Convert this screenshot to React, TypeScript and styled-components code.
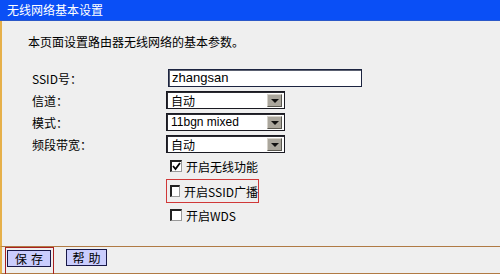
import React from "react";
import styled, { createGlobalStyle } from "styled-components";

const Global = createGlobalStyle`
  html, body { margin: 0; padding: 0; background: #efefef; }
  body { font-family: "Noto Sans CJK SC", "Liberation Sans", sans-serif; }
`;

const CJK = `"Noto Sans CJK SC", "Liberation Sans", sans-serif`;

const Page = styled.div`
  width: 500px;
  height: 274px;
  display: flex;
  flex-direction: column;
  background: #efefef;
  overflow: hidden;
`;

const TitleBar = styled.div`
  height: 21px;
  background: #0a4ff6;
  border-bottom: 1px solid #2a58c8;
  box-sizing: border-box;
  color: #ffffff;
  font-family: ${CJK};
  font-size: 12px;
  line-height: 20px;
  padding-left: 7px;
`;

const Body = styled.div`
  height: 226px;
  box-sizing: border-box;
  border-left: 2px solid #e6b04a;
  padding-top: 13px;
  display: flex;
  flex-direction: column;
`;

const Intro = styled.div`
  font-family: ${CJK};
  font-size: 12px;
  line-height: 16px;
  color: #000;
  padding-left: 26px;
`;

const FormGrid = styled.div`
  margin-top: 17px;
  display: grid;
  grid-template-columns: 134px 1fr;
  grid-auto-rows: 22px;
  padding-left: 30px;
  align-items: center;
`;

const Label = styled.div`
  font-family: ${CJK};
  font-size: 12px;
  color: #000;
`;

const TextInput = styled.div`
  margin-left: 2px;
  width: 194px;
  height: 18px;
  box-sizing: border-box;
  background: #fff;
  border: 1px solid #1c2440;
  box-shadow: inset 1px 1px 0 #5a6070;
  font-family: "Liberation Sans", Arial, sans-serif;
  font-size: 13px;
  line-height: 16px;
  padding-left: 3px;
  color: #000;
`;

const Select = styled.div`
  width: 119px;
  height: 18px;
  box-sizing: border-box;
  background: #fff;
  border: 1px solid #1a1a22;
  box-shadow: inset 1px 1px 0 #2a2a30;
  display: flex;
  align-items: stretch;
  padding: 2px 2px 1px 2px;
`;

const SelectText = styled.div<{ $latin?: boolean }>`
  flex: 1;
  font-family: ${(p) => (p.$latin ? `"Liberation Sans", Arial, sans-serif` : CJK)};
  font-size: 12px;
  line-height: 13px;
  padding-left: 2px;
  color: #000;
`;

const ArrowBox = styled.div`
  width: 15px;
  background: #aaa69c;
  border-top: 1px solid #d6d2ca;
  border-left: 1px solid #d6d2ca;
  border-right: 1px solid #5a5850;
  border-bottom: 1px solid #5a5850;
  box-sizing: border-box;
  display: flex;
  align-items: center;
  justify-content: center;
`;

const Triangle = styled.div`
  width: 0;
  height: 0;
  border-left: 4px solid transparent;
  border-right: 4px solid transparent;
  border-top: 4px solid #111;
`;

const CheckList = styled.div`
  display: flex;
  flex-direction: column;
  padding-left: 164px;
`;

const CheckRow = styled.div<{ $mt: number; $boxed?: boolean }>`
  margin-top: ${(p) => p.$mt}px;
  height: ${(p) => (p.$boxed ? 24 : 20)}px;
  box-sizing: border-box;
  display: flex;
  align-items: center;
  gap: 4px;
  padding-left: ${(p) => (p.$boxed ? 3 : 4)}px;
  border: ${(p) => (p.$boxed ? "1px solid #d03838" : "none")};
  width: ${(p) => (p.$boxed ? "93px" : "auto")};
`;

const Box = styled.div`
  width: 12px;
  height: 12px;
  box-sizing: border-box;
  background: #fff;
  border-top: 2px solid #222;
  border-left: 2px solid #222;
  border-right: 1px solid #9a9a9a;
  border-bottom: 1px solid #9a9a9a;
  display: flex;
  align-items: center;
  justify-content: center;
`;

const CheckText = styled.span`
  font-family: ${CJK};
  font-size: 12px;
  color: #000;
  white-space: nowrap;
`;

const Footer = styled.div`
  height: 28px;
  box-sizing: border-box;
  border-top: 1px solid #b07a44;
  border-bottom: 1px solid #b07a44;
  border-left: 2px solid #e6b04a;
  display: flex;
  align-items: flex-start;
`;

const RedFrame = styled.div`
  margin-left: 3px;
  height: 27px;
  box-sizing: border-box;
  border: 1px solid #a82020;
  border-bottom: none;
  padding: 2px 2px 0 1px;
`;

const Button = styled.div<{ $w: number }>`
  width: ${(p) => p.$w}px;
  height: 17px;
  box-sizing: border-box;
  background: #cacdfd;
  border: 1px solid #181848;
  font-family: ${CJK};
  font-size: 12px;
  line-height: 15px;
  letter-spacing: 4px;
  text-indent: 4px;
  text-align: center;
  color: #000;
`;

const HelpWrap = styled.div`
  margin-left: 12px;
  margin-top: 2px;
`;

const Check = () => (
  <svg width="9" height="9" viewBox="0 0 9 9">
    <path d="M1 4 L3.5 7 L8 1" stroke="#000" strokeWidth="1.8" fill="none" />
  </svg>
);

const SelectBox: React.FC<{ value: string; latin?: boolean }> = ({ value, latin }) => (
  <Select>
    <SelectText $latin={latin}>{value}</SelectText>
    <ArrowBox>
      <Triangle />
    </ArrowBox>
  </Select>
);

export default function App() {
  return (
    <Page>
      <Global />
      <TitleBar>无线网络基本设置</TitleBar>
      <Body>
        <Intro>本页面设置路由器无线网络的基本参数。</Intro>
        <FormGrid>
          <Label>SSID号：</Label>
          <TextInput>zhangsan</TextInput>
          <Label>信道：</Label>
          <SelectBox value="自动" />
          <Label>模式：</Label>
          <SelectBox value="11bgn mixed" latin />
          <Label>频段带宽：</Label>
          <SelectBox value="自动" />
        </FormGrid>
        <CheckList>
          <CheckRow $mt={1}>
            <Box>
              <Check />
            </Box>
            <CheckText>开启无线功能</CheckText>
          </CheckRow>
          <CheckRow $mt={3} $boxed>
            <Box />
            <CheckText>开启SSID广播</CheckText>
          </CheckRow>
          <CheckRow $mt={2}>
            <Box />
            <CheckText>开启WDS</CheckText>
          </CheckRow>
        </CheckList>
      </Body>
      <Footer>
        <RedFrame>
          <Button $w={44}>保存</Button>
        </RedFrame>
        <HelpWrap>
          <Button $w={41}>帮助</Button>
        </HelpWrap>
      </Footer>
    </Page>
  );
}
